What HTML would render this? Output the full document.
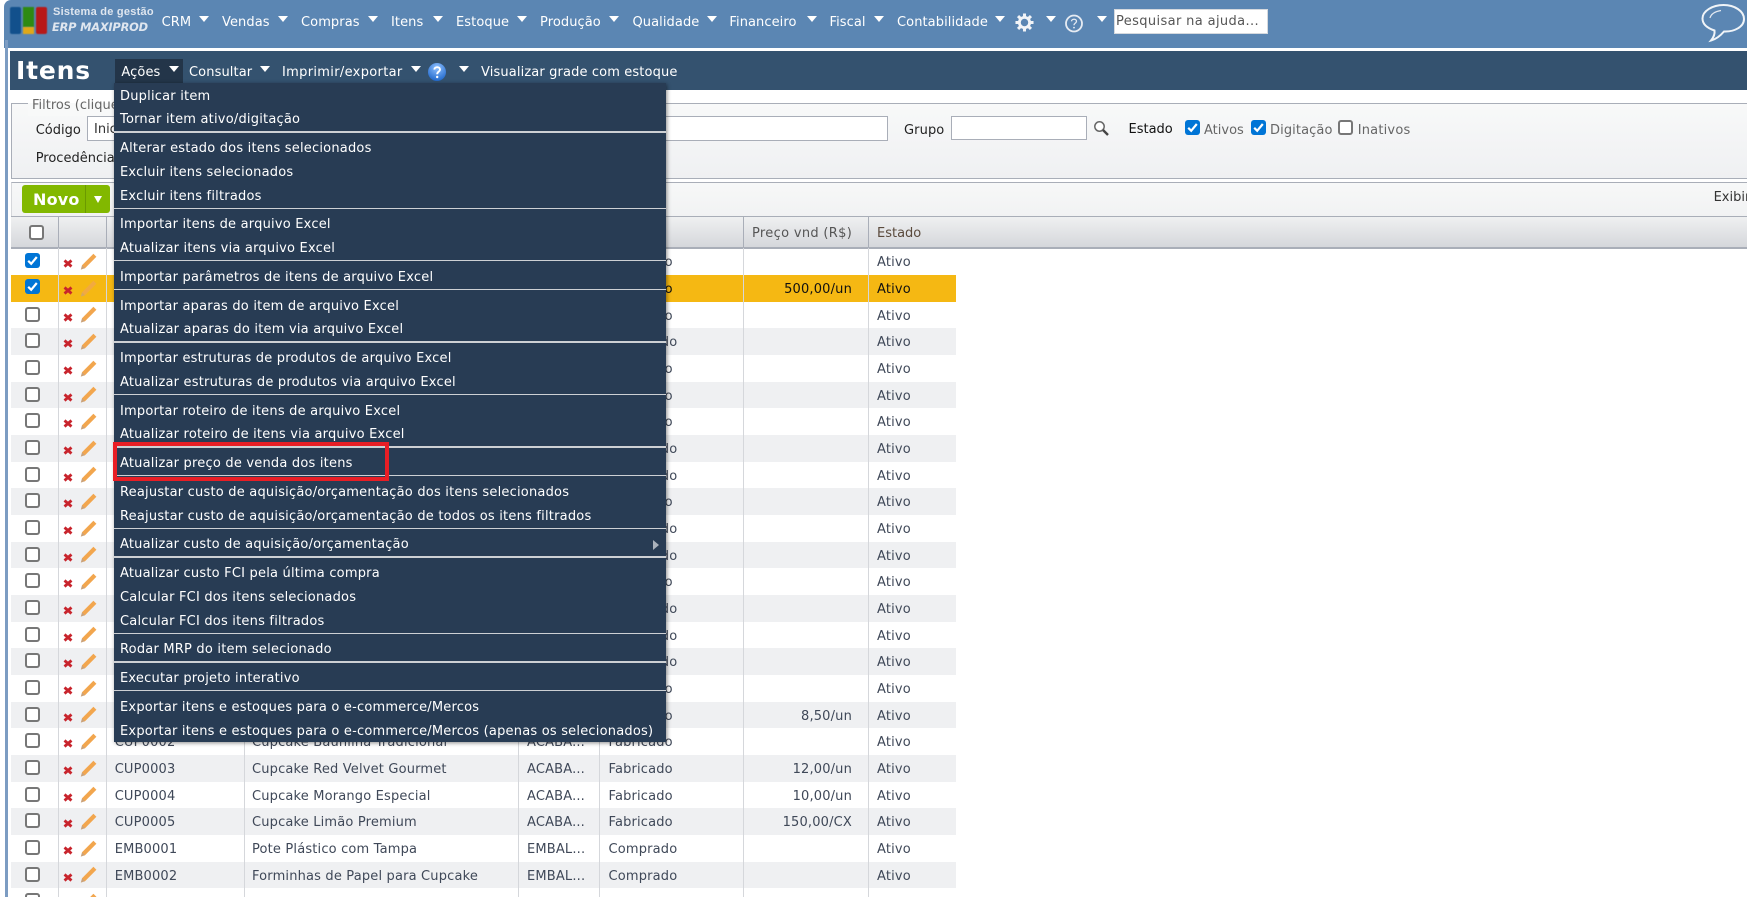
<!DOCTYPE html>
<html lang="pt"><head><meta charset="utf-8"><title>Itens</title>
<style>
html,body{margin:0;padding:0;background:#fff;width:1747px;height:897px;overflow:hidden}
body{position:relative;font-family:"DejaVu Sans","Liberation Sans",sans-serif;font-size:13px;color:#444}
.a{position:absolute}
.t{position:absolute;white-space:nowrap;line-height:20px;height:20px}
.w{color:#fff;letter-spacing:.1px}
.ar{position:absolute;width:0;height:0;border-left:5px solid transparent;border-right:5px solid transparent;border-top:6px solid #fff}
.n{color:#fff;letter-spacing:.08px}
.m{position:absolute;left:120px;white-space:nowrap;line-height:20px;color:#fff;margin-top:1px;letter-spacing:.21px}
.s{position:absolute;left:114px;width:552px;background:#cdd0d4}
.r{position:absolute;left:11px;width:945px;height:26.67px;line-height:30.8px;color:#3f4858;letter-spacing:.17px}
.g{background:#eff0f2}
.y{background:#f5b813;color:#111}
.r span{position:absolute;white-space:nowrap}
.c1{left:103.7px}.c2{left:241px}.c3{left:516px}.c4{left:597.5px}
.c6{right:104px}.c7{left:866px}
.cb{position:absolute;left:14px;top:5px;width:11px;height:11px;border:2px solid #777;border-radius:3px;background:#fff}
.ck{position:absolute;width:15px;height:15px;border-radius:3px;background:#0075d6}
.ck svg{position:absolute;left:0;top:0}
.l{position:absolute;top:248px;height:649px;width:1px;background:#d5d7db}
.r svg{position:absolute}
</style></head><body>
<svg width="0" height="0" style="position:absolute"><defs>
<symbol id="x" viewBox="0 0 10 9"><path d="M1.5 1.5L8.5 7.5M8.5 1.5L1.5 7.5" stroke="#c8242c" stroke-width="2.8" fill="none"/></symbol>
<symbol id="p" viewBox="0 0 17 17"><path d="M13.4 0.8L16.4 3.8L5 15.2L2.4 15.6L2 12.2Z" fill="#f2a64e"/><path d="M2 12.2L0.8 16.6L5 15.2Z" fill="#caa27a"/></symbol>
<symbol id="v" viewBox="0 0 15 15"><path d="M3.2 7.8L6.2 10.8L11.8 4" stroke="#fff" stroke-width="2.2" fill="none"/></symbol>
</defs></svg>

<!-- top header -->
<div class="a" style="left:4px;top:0;width:1743px;height:48px;background:#5b86b3;border-top-left-radius:7px"></div>
<div class="a" style="left:5px;top:40px;width:3px;height:857px;background:#7c9cc2"></div>

<div class="a" style="left:10px;top:7px;width:11px;height:27px;background:#12508c;border-radius:2px;filter:blur(.4px)"></div>
<div class="a" style="left:23px;top:7px;width:11px;height:20px;background:#2e8a12;filter:blur(.4px)"></div>
<div class="a" style="left:23px;top:27px;width:11px;height:7px;background:#e0a818;filter:blur(.4px)"></div>
<div class="a" style="left:36px;top:7px;width:10.5px;height:27px;background:#b81818;border-radius:2px;filter:blur(.4px)"></div>
<div class="t" style="left:53px;top:2px;font-size:11px;font-weight:bold;font-family:'Liberation Sans',sans-serif;color:#dfe6ef;letter-spacing:.25px">Sistema de gestão</div>
<div class="t" style="left:52px;top:17px;font-size:11.4px;font-weight:bold;font-style:italic;color:#dfe6ef;letter-spacing:-.2px">ERP MAXIPROD</div>

<div class="t n" style="left:161.6px;top:13px">CRM</div><div class="ar" style="left:199px;top:16px"></div>
<div class="t n" style="left:222px;top:13px">Vendas</div><div class="ar" style="left:278px;top:16px"></div>
<div class="t n" style="left:301px;top:13px">Compras</div><div class="ar" style="left:368px;top:16px"></div>
<div class="t n" style="left:391px;top:13px">Itens</div><div class="ar" style="left:433px;top:16px"></div>
<div class="t n" style="left:456px;top:13px">Estoque</div><div class="ar" style="left:517px;top:16px"></div>
<div class="t n" style="left:540px;top:13px">Produção</div><div class="ar" style="left:609px;top:16px"></div>
<div class="t n" style="left:632.5px;top:13px">Qualidade</div><div class="ar" style="left:707px;top:16px"></div>
<div class="t n" style="left:729.4px;top:13px">Financeiro</div><div class="ar" style="left:807px;top:16px"></div>
<div class="t n" style="left:829.5px;top:13px">Fiscal</div><div class="ar" style="left:874px;top:16px"></div>
<div class="t n" style="left:897px;top:13px">Contabilidade</div><div class="ar" style="left:995px;top:16px"></div>

<svg class="a" style="left:1015px;top:13px" width="19" height="19" viewBox="0 0 20 20"><circle cx="10" cy="10" r="5.4" fill="none" stroke="#f2f4f7" stroke-width="3"/><g stroke="#f2f4f7" stroke-width="3.2"><path d="M10 0.5V4M10 16V19.5M0.5 10H4M16 10H19.5M3.2 3.2L5.6 5.6M14.4 14.4L16.8 16.8M16.8 3.2L14.4 5.6M5.6 14.4L3.2 16.8"/></g></svg>
<div class="ar" style="left:1046px;top:16px"></div>
<svg class="a" style="left:1064px;top:14px" width="20" height="19" viewBox="0 0 20 19"><circle cx="10" cy="9.5" r="8" fill="none" stroke="#e6ebf2" stroke-width="1.8"/><path d="M7.5 7.3C7.6 4.6 12.5 4.6 12.5 7.3C12.5 9.2 10 9 10 11.2" fill="none" stroke="#e6ebf2" stroke-width="1.3"/><circle cx="10" cy="13.6" r=".9" fill="#e6ebf2"/></svg>
<div class="ar" style="left:1097px;top:16px"></div>
<div class="a" style="left:1114px;top:9px;width:152px;height:23px;background:#fff;border:1px solid #d5d9de"></div>
<div class="t" style="left:1116px;top:12px;color:#555;letter-spacing:.37px">Pesquisar na ajuda...</div>
<svg class="a" style="left:1701px;top:3px" width="45" height="40" viewBox="0 0 45 40"><path d="M22.5 2C33.5 2 43 8 43 16C43 24 33 29 23 28.5C20 32 16 36 10 37.5C12.5 34.5 14 31 13.5 27.5C6 25 1.5 21 1.5 15.5C1.5 8 11.5 2 22.5 2Z" fill="none" stroke="#f0f4f8" stroke-width="2"/><path d="M9 15C10 11 14 8.5 20 7.5" fill="none" stroke="#e3e9f1" stroke-width="1.2"/></svg>

<!-- title bar -->
<div class="a" style="left:10px;top:51px;width:1737px;height:39px;background:#34526f"></div>
<div class="t" style="left:16px;top:59px;height:24px;line-height:24px;font-size:25px;font-weight:bold;color:#fff;letter-spacing:.8px">Itens</div>
<div class="a" style="left:115px;top:59px;width:68px;height:24px;background:#233549"></div>
<div class="t w" style="left:121.4px;top:63px">Ações</div><div class="ar" style="left:169px;top:66px"></div>
<div class="t w" style="left:189px;top:63px">Consultar</div><div class="ar" style="left:260px;top:66px"></div>
<div class="t w" style="left:282px;top:63px;letter-spacing:.32px">Imprimir/exportar</div><div class="ar" style="left:411px;top:66px"></div>
<svg class="a" style="left:427px;top:62px" width="20" height="20" viewBox="0 0 20 20"><defs><radialGradient id="hb" cx=".5" cy=".25" r=".8"><stop offset="0" stop-color="#8ec0ff"/><stop offset="1" stop-color="#1a63c8"/></radialGradient></defs><circle cx="10" cy="10" r="9" fill="url(#hb)"/><path d="M7.3 7.6C7.5 4.4 13 4.4 13 7.6C13 9.8 10.2 9.6 10.2 12.2" fill="none" stroke="#fff" stroke-width="1.9"/><circle cx="10.2" cy="15" r="1.2" fill="#fff"/></svg>
<div class="ar" style="left:459px;top:66px"></div>
<div class="t w" style="left:481px;top:63px;letter-spacing:.13px">Visualizar grade com estoque</div>

<!-- filters -->
<div class="a" style="left:10.5px;top:103px;width:1737px;height:74px;border:1px solid #a9aeb8;border-right:0;background:linear-gradient(#f8f9f9,#eff0f2)"></div>
<div class="t" style="left:28px;top:96px;padding:0 4px;color:#666;background:linear-gradient(#fff 35%,#f8f9f9 35%)">Filtros (clique</div>
<div class="t" style="left:35.7px;top:121px;color:#222">Código</div>
<div class="a" style="left:87px;top:116px;width:799px;height:23px;background:#fff;border:1px solid #a9aeb8"></div>
<div class="t" style="left:94px;top:120px;color:#333">Inicia</div>
<div class="t" style="left:35.7px;top:149px;color:#222">Procedência</div>
<div class="t" style="left:904px;top:121px;color:#222;letter-spacing:.1px">Grupo</div>
<div class="a" style="left:951px;top:116px;width:134px;height:22px;background:#fff;border:1px solid #a9aeb8"></div>
<svg class="a" style="left:1093px;top:120px" width="17" height="17" viewBox="0 0 17 17"><circle cx="6.5" cy="6.5" r="4.7" fill="#fff" stroke="#666" stroke-width="1.5"/><path d="M10 10L15 15" stroke="#444" stroke-width="2.4"/></svg>
<div class="t" style="left:1128.5px;top:120px;color:#111">Estado</div>
<div class="ck" style="left:1185px;top:120px"><svg width="15" height="15"><use href="#v"/></svg></div>
<div class="t" style="left:1204px;top:121px;color:#666">Ativos</div>
<div class="ck" style="left:1251px;top:120px"><svg width="15" height="15"><use href="#v"/></svg></div>
<div class="t" style="left:1270px;top:121px;color:#666;letter-spacing:.1px">Digitação</div>
<div class="a" style="left:1338px;top:120px;width:11px;height:11px;border:2px solid #777;border-radius:3px;background:#fff"></div>
<div class="t" style="left:1357.7px;top:121px;color:#666;letter-spacing:.2px">Inativos</div>

<!-- toolbar -->
<div class="a" style="left:10.5px;top:182px;width:1737px;height:34px;border-top:1px solid #a9aeb8;border-left:1px solid #d5d7db;background:linear-gradient(#f7f8f8,#f1f2f3)"></div>
<div class="a" style="left:22px;top:185px;width:88px;height:28px;background:#82b800;border-radius:3px"></div>
<div class="a" style="left:85px;top:185px;width:1px;height:28px;background:#6b9a00"></div>
<div class="t" style="left:33px;top:189.5px;font-size:16px;font-weight:bold;color:#fff;letter-spacing:.2px">Novo</div>
<div class="a" style="left:94px;top:196px;width:0;height:0;border-left:4px solid transparent;border-right:4px solid transparent;border-top:7px solid #fff"></div>
<div class="t" style="left:1713.6px;top:188px;color:#333">Exibir</div>

<!-- table head -->
<div class="a" style="left:11px;top:216px;width:1736px;height:30px;border-top:1px solid #a9aeb8;border-bottom:2px solid #a9aeb8;background:linear-gradient(#eff0f1,#d5d7db)"></div>
<div class="a" style="left:58px;top:217px;width:1px;height:31px;background:#a9aeb8"></div>
<div class="a" style="left:106px;top:217px;width:1px;height:31px;background:#a9aeb8"></div>
<div class="a" style="left:743px;top:217px;width:1px;height:31px;background:#a9aeb8"></div>
<div class="a" style="left:868px;top:217px;width:1px;height:31px;background:#a9aeb8"></div>
<div class="a" style="left:29px;top:225px;width:11px;height:11px;border:2px solid #777;border-radius:3px;background:#fff"></div>
<div class="t" style="left:752px;top:224px;color:#555;letter-spacing:.32px">Preço vnd (R$)</div>
<div class="t" style="left:877px;top:224px;color:#5a4a3c">Estado</div>

<!-- rows -->
<div class="a" style="left:0;top:0;width:1747px;height:897px;overflow:hidden">
<div class="r" style="top:248.3px"><div class="ck" style="left:14px;top:4.4px"><svg width="15" height="15"><use href="#v"/></svg></div><svg style="left:52px;top:11px" width="10" height="9"><use href="#x"/></svg><svg style="left:69px;top:4.5px" width="17" height="17"><use href="#p"/></svg><span class="c4">Fabricado</span><span class="c7">Ativo</span></div>
<div class="r y" style="top:275px"><div class="ck" style="left:14px;top:4.4px"><svg width="15" height="15"><use href="#v"/></svg></div><svg style="left:52px;top:11px" width="10" height="9"><use href="#x"/></svg><svg style="left:69px;top:4.5px;opacity:.75" width="17" height="17"><use href="#p"/></svg><span class="c4">Fabricado</span><span class="c6">500,00/un</span><span class="c7">Ativo</span></div>
<div class="r" style="top:301.6px"><div class="cb"></div><svg style="left:52px;top:11px" width="10" height="9"><use href="#x"/></svg><svg style="left:69px;top:4.5px" width="17" height="17"><use href="#p"/></svg><span class="c4">Fabricado</span><span class="c7">Ativo</span></div>
<div class="r g" style="top:328.3px"><div class="cb"></div><svg style="left:52px;top:11px" width="10" height="9"><use href="#x"/></svg><svg style="left:69px;top:4.5px" width="17" height="17"><use href="#p"/></svg><span class="c4">Comprado</span><span class="c7">Ativo</span></div>
<div class="r" style="top:355px"><div class="cb"></div><svg style="left:52px;top:11px" width="10" height="9"><use href="#x"/></svg><svg style="left:69px;top:4.5px" width="17" height="17"><use href="#p"/></svg><span class="c4">Fabricado</span><span class="c7">Ativo</span></div>
<div class="r g" style="top:381.6px"><div class="cb"></div><svg style="left:52px;top:11px" width="10" height="9"><use href="#x"/></svg><svg style="left:69px;top:4.5px" width="17" height="17"><use href="#p"/></svg><span class="c4">Fabricado</span><span class="c7">Ativo</span></div>
<div class="r" style="top:408.3px"><div class="cb"></div><svg style="left:52px;top:11px" width="10" height="9"><use href="#x"/></svg><svg style="left:69px;top:4.5px" width="17" height="17"><use href="#p"/></svg><span class="c4">Fabricado</span><span class="c7">Ativo</span></div>
<div class="r g" style="top:435px"><div class="cb"></div><svg style="left:52px;top:11px" width="10" height="9"><use href="#x"/></svg><svg style="left:69px;top:4.5px" width="17" height="17"><use href="#p"/></svg><span class="c4">Comprado</span><span class="c7">Ativo</span></div>
<div class="r" style="top:461.6px"><div class="cb"></div><svg style="left:52px;top:11px" width="10" height="9"><use href="#x"/></svg><svg style="left:69px;top:4.5px" width="17" height="17"><use href="#p"/></svg><span class="c4">Comprado</span><span class="c7">Ativo</span></div>
<div class="r g" style="top:488.3px"><div class="cb"></div><svg style="left:52px;top:11px" width="10" height="9"><use href="#x"/></svg><svg style="left:69px;top:4.5px" width="17" height="17"><use href="#p"/></svg><span class="c4">Fabricado</span><span class="c7">Ativo</span></div>
<div class="r" style="top:515px"><div class="cb"></div><svg style="left:52px;top:11px" width="10" height="9"><use href="#x"/></svg><svg style="left:69px;top:4.5px" width="17" height="17"><use href="#p"/></svg><span class="c4">Comprado</span><span class="c7">Ativo</span></div>
<div class="r g" style="top:541.6px"><div class="cb"></div><svg style="left:52px;top:11px" width="10" height="9"><use href="#x"/></svg><svg style="left:69px;top:4.5px" width="17" height="17"><use href="#p"/></svg><span class="c4">Comprado</span><span class="c7">Ativo</span></div>
<div class="r" style="top:568.3px"><div class="cb"></div><svg style="left:52px;top:11px" width="10" height="9"><use href="#x"/></svg><svg style="left:69px;top:4.5px" width="17" height="17"><use href="#p"/></svg><span class="c4">Fabricado</span><span class="c7">Ativo</span></div>
<div class="r g" style="top:595px"><div class="cb"></div><svg style="left:52px;top:11px" width="10" height="9"><use href="#x"/></svg><svg style="left:69px;top:4.5px" width="17" height="17"><use href="#p"/></svg><span class="c4">Comprado</span><span class="c7">Ativo</span></div>
<div class="r" style="top:621.6px"><div class="cb"></div><svg style="left:52px;top:11px" width="10" height="9"><use href="#x"/></svg><svg style="left:69px;top:4.5px" width="17" height="17"><use href="#p"/></svg><span class="c4">Comprado</span><span class="c7">Ativo</span></div>
<div class="r g" style="top:648.3px"><div class="cb"></div><svg style="left:52px;top:11px" width="10" height="9"><use href="#x"/></svg><svg style="left:69px;top:4.5px" width="17" height="17"><use href="#p"/></svg><span class="c4">Comprado</span><span class="c7">Ativo</span></div>
<div class="r" style="top:675px"><div class="cb"></div><svg style="left:52px;top:11px" width="10" height="9"><use href="#x"/></svg><svg style="left:69px;top:4.5px" width="17" height="17"><use href="#p"/></svg><span class="c4">Fabricado</span><span class="c7">Ativo</span></div>
<div class="r g" style="top:701.6px"><div class="cb"></div><svg style="left:52px;top:11px" width="10" height="9"><use href="#x"/></svg><svg style="left:69px;top:4.5px" width="17" height="17"><use href="#p"/></svg><span class="c4">Fabricado</span><span class="c6">8,50/un</span><span class="c7">Ativo</span></div>
<div class="r" style="top:728.3px"><div class="cb"></div><svg style="left:52px;top:11px" width="10" height="9"><use href="#x"/></svg><svg style="left:69px;top:4.5px" width="17" height="17"><use href="#p"/></svg><span class="c1">CUP0002</span><span class="c2">Cupcake Baunilha Tradicional</span><span class="c3">ACABA...</span><span class="c4">Fabricado</span><span class="c7">Ativo</span></div>
<div class="r g" style="top:755px"><div class="cb"></div><svg style="left:52px;top:11px" width="10" height="9"><use href="#x"/></svg><svg style="left:69px;top:4.5px" width="17" height="17"><use href="#p"/></svg><span class="c1">CUP0003</span><span class="c2">Cupcake Red Velvet Gourmet</span><span class="c3">ACABA...</span><span class="c4">Fabricado</span><span class="c6">12,00/un</span><span class="c7">Ativo</span></div>
<div class="r" style="top:781.6px"><div class="cb"></div><svg style="left:52px;top:11px" width="10" height="9"><use href="#x"/></svg><svg style="left:69px;top:4.5px" width="17" height="17"><use href="#p"/></svg><span class="c1">CUP0004</span><span class="c2">Cupcake Morango Especial</span><span class="c3">ACABA...</span><span class="c4">Fabricado</span><span class="c6">10,00/un</span><span class="c7">Ativo</span></div>
<div class="r g" style="top:808.3px"><div class="cb"></div><svg style="left:52px;top:11px" width="10" height="9"><use href="#x"/></svg><svg style="left:69px;top:4.5px" width="17" height="17"><use href="#p"/></svg><span class="c1">CUP0005</span><span class="c2">Cupcake Limão Premium</span><span class="c3">ACABA...</span><span class="c4">Fabricado</span><span class="c6">150,00/CX</span><span class="c7">Ativo</span></div>
<div class="r" style="top:835px"><div class="cb"></div><svg style="left:52px;top:11px" width="10" height="9"><use href="#x"/></svg><svg style="left:69px;top:4.5px" width="17" height="17"><use href="#p"/></svg><span class="c1">EMB0001</span><span class="c2">Pote Plástico com Tampa</span><span class="c3">EMBAL...</span><span class="c4">Comprado</span><span class="c7">Ativo</span></div>
<div class="r g" style="top:861.6px"><div class="cb"></div><svg style="left:52px;top:11px" width="10" height="9"><use href="#x"/></svg><svg style="left:69px;top:4.5px" width="17" height="17"><use href="#p"/></svg><span class="c1">EMB0002</span><span class="c2">Forminhas de Papel para Cupcake</span><span class="c3">EMBAL...</span><span class="c4">Comprado</span><span class="c7">Ativo</span></div>
<div class="r" style="top:888.3px"><div class="cb"></div><svg style="left:69px;top:4.5px" width="17" height="17"><use href="#p"/></svg></div>
</div>
<div class="l" style="left:58px"></div><div class="l" style="left:106px"></div><div class="l" style="left:244px"></div><div class="l" style="left:518px"></div><div class="l" style="left:599px"></div><div class="l" style="left:743px"></div><div class="l" style="left:868px"></div>

<!-- menu -->
<div class="a" style="left:114px;top:83px;width:552px;height:659px;background:#283c54;box-shadow:1px 1px 4px rgba(0,0,0,.45)"></div>
<div class="m" style="top:86px">Duplicar item</div>
<div class="m" style="top:109px">Tornar item ativo/digitação</div>
<div class="s" style="top:131px;height:2px"></div>
<div class="m" style="top:138px">Alterar estado dos itens selecionados</div>
<div class="m" style="top:162px">Excluir itens selecionados</div>
<div class="m" style="top:186px">Excluir itens filtrados</div>
<div class="s" style="top:208px;height:1px"></div>
<div class="m" style="top:214px">Importar itens de arquivo Excel</div>
<div class="m" style="top:238px">Atualizar itens via arquivo Excel</div>
<div class="s" style="top:260px;height:1px"></div>
<div class="m" style="top:267px">Importar parâmetros de itens de arquivo Excel</div>
<div class="s" style="top:289px;height:1px"></div>
<div class="m" style="top:296px">Importar aparas do item de arquivo Excel</div>
<div class="m" style="top:319px">Atualizar aparas do item via arquivo Excel</div>
<div class="s" style="top:341px;height:2px"></div>
<div class="m" style="top:348px">Importar estruturas de produtos de arquivo Excel</div>
<div class="m" style="top:372px">Atualizar estruturas de produtos via arquivo Excel</div>
<div class="s" style="top:394px;height:1px"></div>
<div class="m" style="top:401px">Importar roteiro de itens de arquivo Excel</div>
<div class="m" style="top:424px">Atualizar roteiro de itens via arquivo Excel</div>
<div class="s" style="top:446px;height:2px"></div>
<div class="m" style="top:453px">Atualizar preço de venda dos itens</div>
<div class="s" style="top:475px;height:1px"></div>
<div class="m" style="top:482px">Reajustar custo de aquisição/orçamentação dos itens selecionados</div>
<div class="m" style="top:506px">Reajustar custo de aquisição/orçamentação de todos os itens filtrados</div>
<div class="s" style="top:528px;height:1px"></div>
<div class="m" style="top:534px">Atualizar custo de aquisição/orçamentação</div>
<div class="a" style="left:653px;top:540px;width:0;height:0;border-top:5px solid transparent;border-bottom:5px solid transparent;border-left:6px solid #aab2bc"></div>
<div class="s" style="top:556px;height:2px"></div>
<div class="m" style="top:563px">Atualizar custo FCI pela última compra</div>
<div class="m" style="top:587px">Calcular FCI dos itens selecionados</div>
<div class="m" style="top:611px">Calcular FCI dos itens filtrados</div>
<div class="s" style="top:633px;height:1px"></div>
<div class="m" style="top:639px">Rodar MRP do item selecionado</div>
<div class="s" style="top:661px;height:2px"></div>
<div class="m" style="top:668px">Executar projeto interativo</div>
<div class="s" style="top:690px;height:1px"></div>
<div class="m" style="top:697px">Exportar itens e estoques para o e-commerce/Mercos</div>
<div class="m" style="top:721px">Exportar itens e estoques para o e-commerce/Mercos (apenas os selecionados)</div>

<!-- red highlight -->
<div class="a" style="left:113px;top:442px;width:268px;height:31px;border:4px solid #e81e25"></div>
</body></html>
